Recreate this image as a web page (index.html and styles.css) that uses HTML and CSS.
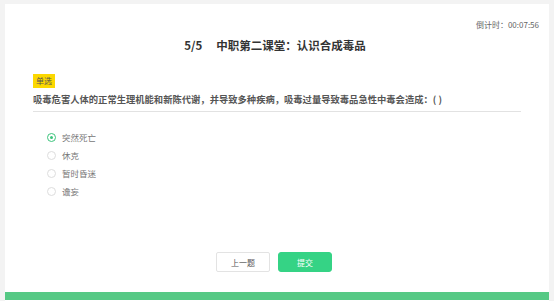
FILE: index.html
```html
<!DOCTYPE html>
<html lang="zh-CN">
<head>
  <meta charset="UTF-8">
  <meta name="viewport" content="width=device-width, initial-scale=1.0">
  <title>答题</title>
  <link rel="stylesheet" href="styles.css">
</head>
<body>
  <div class="page">
    <div class="timer">倒计时：00:07:56</div>
    <h1 class="title"><span class="num">5/5</span>中职第二课堂：认识合成毒品</h1>

    <div class="question">
      <span class="tag">单选</span>
      <p class="stem">吸毒危害人体的正常生理机能和新陈代谢，并导致多种疾病，吸毒过量导致毒品急性中毒会造成：( )</p>
    </div>

    <ul class="options">
      <li class="option checked"><span class="radio"></span>突然死亡</li>
      <li class="option"><span class="radio"></span>休克</li>
      <li class="option"><span class="radio"></span>暂时昏迷</li>
      <li class="option"><span class="radio"></span>谵妄</li>
    </ul>

    <div class="actions">
      <button class="btn">上一题</button>
      <button class="btn primary">提交</button>
    </div>

    <div class="progress"></div>
  </div>
</body>
</html>
```

FILE: styles.css
```css
body {
  margin: 0;
  background: #f3f3f3;
  font-family: "Noto Sans CJK SC", "Noto Sans", sans-serif;
  height: 301px;
  overflow: hidden;
}

.page {
  margin: 4px 5px 0 5px;
  background: #fff;
  height: 297px;
  display: flex;
  flex-direction: column;
}

.timer {
  align-self: flex-end;
  font-size: 8px;
  color: #666;
  margin: 15px 10px 0 0;
  line-height: 12px;
}

.title {
  margin: 5px 0 0;
  text-align: center;
  font-size: 11.5px;
  line-height: 18px;
  color: #333;
  font-weight: 700;
  padding-right: 4px;
}

.num {
  margin-right: 14px;
}

.question {
  margin: 11px 28px 0 28px;
  border-bottom: 1px solid #e2e2e2;
  padding-bottom: 5px;
}

.tag {
  display: inline-block;
  background: #fcd800;
  color: #555;
  font-size: 8px;
  line-height: 14px;
  padding: 0 3px;
}

.stem {
  margin: 3px 0 0;
  font-size: 9.3px;
  line-height: 14px;
  color: #555;
  font-weight: 700;
  white-space: nowrap;
}

.options {
  list-style: none;
  margin: 16px 0 0 42px;
  padding: 0;
}

.option {
  display: flex;
  align-items: center;
  font-size: 8.5px;
  line-height: 18px;
  color: #777;
}

.radio {
  width: 7px;
  height: 7px;
  border: 1px solid #ddd;
  border-radius: 50%;
  margin-right: 6px;
  box-sizing: content-box;
  position: relative;
}

.checked .radio {
  border-color: #3cc47c;
}

.checked .radio::after {
  content: "";
  position: absolute;
  left: 2px;
  top: 2px;
  width: 3px;
  height: 3px;
  border-radius: 50%;
  background: #3cc47c;
}

.actions {
  display: flex;
  justify-content: center;
  gap: 8px;
  margin-top: auto;
  margin-bottom: 20px;
  padding-right: 6px;
}

.btn {
  width: 54px;
  height: 20px;
  font-family: inherit;
  font-size: 8px;
  color: #555;
  background: #fff;
  border: 1px solid #e3e3e3;
  border-radius: 2px;
  padding: 0;
}

.primary {
  background: #35d385;
  border-color: #35d385;
  color: #fff;
  border-radius: 3px;
}

.progress {
  height: 8px;
  background: #56c985;
  margin-bottom: 1px;
}
```
